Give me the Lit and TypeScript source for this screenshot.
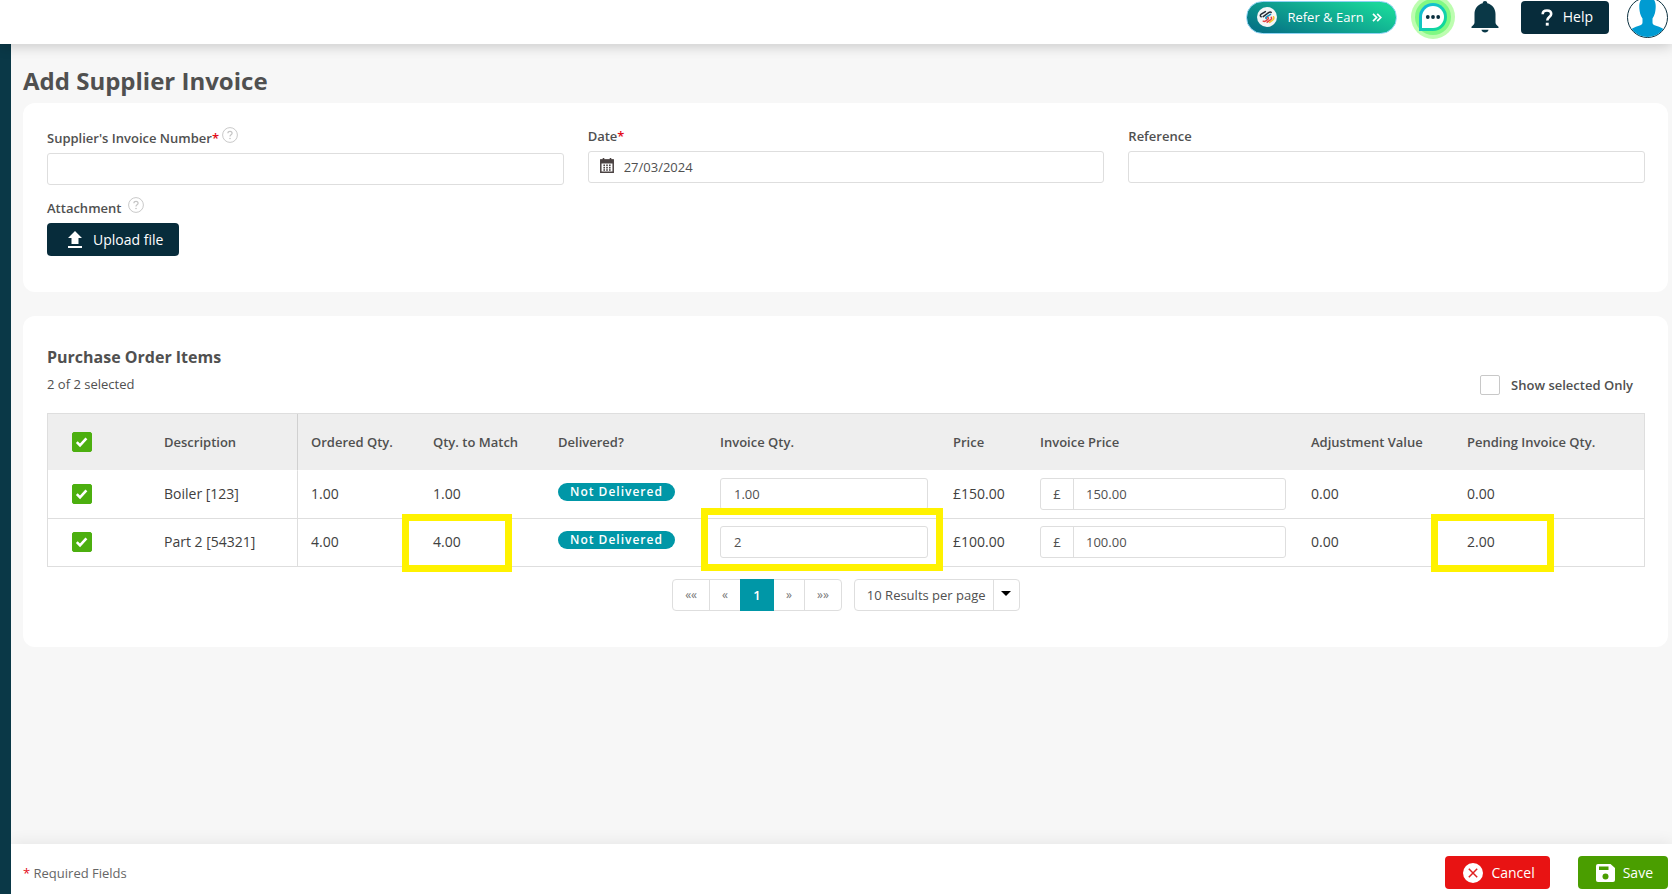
import { LitElement, html, css, svg, nothing } from "lit";
import { customElement, state } from "lit/decorators.js";
import { classMap } from "lit/directives/class-map.js";

interface Item {
  name: string;
  ordered: string;
  toMatch: string;
  invoiceQty: string;
  price: string;
  invoicePrice: string;
  adjustment: string;
  pending: string;
  selected: boolean;
  marked: boolean;
}

const helpIcon = html`<svg class="hint" viewBox="0 0 16 16" role="img" aria-label="More information">
  <circle cx="8" cy="8" r="7.4" fill="none" stroke="#c9c9c9" />
  <path d="M5.9 6.3c0-1.3.9-2 2.1-2s2.1.7 2.1 1.9c0 1.6-2.1 1.5-2.1 3.2" fill="none" stroke="#c4c4c4" stroke-width="1.2" />
  <circle cx="8" cy="11.5" r=".8" fill="#c4c4c4" />
</svg>`;

const dots = [4.2, 7, 9.8].flatMap((x) => [7.3, 9.7, 12].map((y) => [x, y]));

@customElement("app-root")
export class AppRoot extends LitElement {
  @state() private items: Item[] = [
    { name: "Boiler [123]", ordered: "1.00", toMatch: "1.00", invoiceQty: "1.00", price: "£150.00", invoicePrice: "150.00", adjustment: "0.00", pending: "0.00", selected: true, marked: false },
    { name: "Part 2 [54321]", ordered: "4.00", toMatch: "4.00", invoiceQty: "2", price: "£100.00", invoicePrice: "100.00", adjustment: "0.00", pending: "2.00", selected: true, marked: true },
  ];
  @state() private selectedOnly = false;

  static styles = css`
    :host {
      display: flex;
      flex-direction: column;
      min-height: 100vh;
      background: #f7f7f7;
      color: #505050;
      font: 13px/18px "Open Sans", "Noto Sans", sans-serif;
    }
    * { box-sizing: border-box; }
    button, input, select { font: inherit; color: inherit; margin: 0; }
    button { cursor: pointer; }
    svg { display: block; flex: none; }

    .topbar {
      display: flex;
      justify-content: flex-end;
      align-items: center;
      height: 44px;
      padding: 0 4px 10px 0;
      background: #fff;
      box-shadow: 0 2px 14px rgba(0, 0, 0, 0.2);
      z-index: 1;
      clip-path: inset(0 0 -20px 0);
    }
    .refer {
      display: flex;
      align-items: center;
      gap: 10px;
      height: 33px;
      padding: 0 14px 0 10px;
      border: 1px solid #8fd3f4;
      border-radius: 17px;
      background: linear-gradient(20deg, #067586 10%, #19d69a 90%);
      color: #fff;
      text-decoration: none;
      white-space: nowrap;
    }
    .refer-text { display: flex; align-items: center; gap: 8px; }
    .icon-btn { padding: 0; border: 0; background: none; }
    .chat { margin-left: 14px; }
    .bell { margin-left: 16px; }
    .help { margin-left: 22px; }
    .avatar { margin-left: 18px; }

    .btn {
      display: inline-flex;
      align-items: center;
      gap: 10px;
      height: 33px;
      padding: 0 16px 0 20px;
      border: 0;
      border-radius: 4px;
      background: #072c3b;
      color: #fff;
      font-size: 14px;
    }
    .btn.small-gap { gap: 8px; padding: 0 15px 0 18px; }
    .btn.cancel { background: #e81313; }
    .btn.save { background: #4a9e00; }

    .shell { display: flex; flex: 1; }
    .rail { flex: none; width: 11px; background: #0a3847; }
    .page { display: flex; flex-direction: column; flex: 1; min-width: 0; }
    main { flex: 1; padding: 21px 4px 24px 12px; }
    h1 { margin: 0 0 6px; font-size: 24px; line-height: 32px; font-weight: 700; }
    h2 { margin: 0 0 6px; font-size: 16px; line-height: 24px; font-weight: 700; }
    .card { padding: 24px 23px 36px 24px; border-radius: 12px; background: #fff; }
    .card + .card { margin-top: 24px; padding-top: 29px; }

    .fields { display: grid; grid-template-columns: repeat(3, minmax(0, 1fr)); gap: 12px 24px; align-items: start; }
    .label-row { display: flex; align-items: flex-start; gap: 3px; margin-bottom: 6px; }
    .label-row.hinted { height: 20px; }
    .label-row.wide { gap: 7px; }
    .label-row.hinted label, .label-row.hinted .label { padding-top: 2px; }
    .label-row label, .label { font-weight: 600; }
    .req { color: #e30b17; }
    .hint { width: 16px; height: 16px; }
    .box {
      display: flex;
      align-items: center;
      width: 100%;
      height: 32px;
      padding: 0 13px;
      border: 1px solid #dedede;
      border-radius: 3px;
      background: #fff;
    }
    .box .bare { flex: 1; min-width: 0; height: 100%; padding: 0; border: 0; outline: 0; background: none; }
    .date { gap: 10px; padding-left: 11px; }
    .date svg { margin-bottom: 4px; }

    .list-head { display: flex; justify-content: space-between; align-items: flex-start; margin-bottom: 18px; }
    .only { display: flex; align-items: center; gap: 11px; height: 20px; padding-right: 12px; font-weight: 600; }

    .tick {
      display: block;
      appearance: none;
      width: 20px;
      height: 20px;
      border: 1px solid #c8c8c8;
      border-radius: 2px;
      background: #fff;
    }
    .tick:checked {
      border-color: #4caf0f;
      background: #4caf0f url("data:image/svg+xml,%3Csvg xmlns='http://www.w3.org/2000/svg' viewBox='0 0 18 18'%3E%3Cpath d='M3.8 9.2l3.2 3.2 6.4-7' fill='none' stroke='white' stroke-width='2.6'/%3E%3C/svg%3E") center / 18px 18px no-repeat;
    }

    table { width: 100%; table-layout: fixed; border-collapse: separate; border-spacing: 0; border: solid #dedede; border-width: 1px 1px 0; }
    .c-check { width: 103px; }
    .c-desc { width: 147px; }
    .c-ordered { width: 122px; }
    .c-match { width: 125px; }
    .c-delivered { width: 162px; }
    .c-qty { width: 233px; }
    .c-price { width: 87px; }
    .c-inv { width: 271px; }
    .c-adj { width: 156px; }
    .c-pending { width: 190px; }
    th, td { padding: 0 12px 0 13px; text-align: left; white-space: nowrap; }
    th { height: 57px; background: #eee; border-bottom: 1px solid #fff; font-weight: 600; }
    td { position: relative; height: 48px; padding-bottom: 1px; border-bottom: 1px solid #dedede; font-size: 14px; color: #404040; }
    .check { padding-left: 24px; }
    .desc { border-right: 1px solid #dedede; }
    th.desc { border-right-color: #d0d0d0; }
    td .box { font-size: 13px; color: #505050; }
    .money { padding: 0 12px 0 0; }
    .money .sign { display: flex; align-items: center; justify-content: center; width: 33px; height: 100%; margin-right: 12px; border-right: 1px solid #dedede; }
    .badge {
      display: block;
      width: max-content;
      margin-bottom: 4px;
      padding: 0 12px;
      border-radius: 9px;
      background: #0097a7;
      color: #fff;
      font-size: 12px;
      font-weight: 600;
      letter-spacing: 1px;
    }
    .mark { position: absolute; z-index: 1; inset: -5px 33px -6px -18px; border: 7px solid #fff200; pointer-events: none; }
    .mark.input-mark { inset: -11px -3px -5px -6px; }
    .mark.last-mark { inset: -5px 90px -6px -23px; }

    .pager { display: flex; justify-content: center; gap: 12px; margin-top: 12px; }
    .pages { display: flex; height: 32px; border: 1px solid #dedede; border-radius: 4px; }
    .pages button { padding: 0 12px; border: 0; border-right: 1px solid #dedede; background: none; font-size: 12px; color: #777; }
    .pages button:last-child { border-right: 0; }
    .pages .no-line { border-right: 0; }
    .pages .current { width: 34px; margin: -1px 0; border: 0; background: #0097a7; color: #fff; font-size: 13px; font-weight: 600; }
    .per-page { position: relative; height: 32px; border: 1px solid #dedede; border-radius: 4px; }
    .per-page select { height: 30px; padding: 0 33px 0 12px; border: 0; background: none; appearance: none; outline: 0; }
    .per-page .arrow { position: absolute; inset: 0 0 0 auto; display: flex; align-items: center; justify-content: center; width: 26px; border-left: 1px solid #dedede; pointer-events: none; }
    .arrow svg { margin-bottom: 3px; }

    footer {
      display: flex;
      align-items: center;
      justify-content: space-between;
      padding: 12px 4px 5px 12px;
      background: #fff;
      box-shadow: 0 -2px 14px rgba(0, 0, 0, 0.07);
      color: #666;
      clip-path: inset(-20px 0 0 0);
    }
    .actions { display: flex; gap: 28px; }
  `;

  private toggle(index: number, value: boolean) {
    this.items = this.items.map((it, i) => (i === index ? { ...it, selected: value } : it));
  }

  private toggleAll(e: Event) {
    const value = (e.target as HTMLInputElement).checked;
    this.items = this.items.map((it) => ({ ...it, selected: value }));
  }

  private renderTopbar() {
    return html`<header class="topbar">
      <a class="refer" href="#refer">
        <svg width="20" height="20" viewBox="0 0 20 20" aria-hidden="true">
          <circle cx="10" cy="10" r="10" fill="#f4f6f6" />
          <g fill="none" stroke-width="1.5" stroke-linecap="round" stroke-linejoin="round">
            <path d="M4.200 9.800C3 9 3 8 4.200 7.200l4.200-2.600" stroke="#222b35" />
            <path d="M6.200 9.600l5.400-3.900c1-.7 1.900-.8 2.600-.3" stroke="#222b35" />
            <path d="M13.600 7.300L9.400 10c-.9.600-.8 1.300 0 1.700" stroke="#1b93c0" />
            <path d="M6.200 14.200c1 .5 1.700.3 2.600-.3l2-1.500c.9-.7.800-1.400 0-1.900" stroke="#e4403e" />
            <path d="M10.200 15.200l3.600-2.600c1-.8 1.200-1.500.4-2.300" stroke="#e4403e" />
            <path d="M12.600 15.400l3-2.200c1.300-1 1.600-2.300.9-3.500" stroke="#f3c52e" />
          </g>
        </svg>
        <span class="refer-text">Refer &amp; Earn
          <svg width="10" height="9" viewBox="0 0 10 9" fill="none" stroke="#fff" stroke-width="1.7" aria-hidden="true"><path d="M1 .8l3.6 3.7L1 8.200M5.200.8l3.600 3.700-3.600 3.700" /></svg>
        </span>
      </a>
      <button class="icon-btn chat" aria-label="Chat">
        <svg width="44" height="44" viewBox="0 0 44 44">
          <defs><linearGradient id="chat" x1="0" y1="0" x2="1" y2="1"><stop offset="0" stop-color="#12b5e6" /><stop offset="1" stop-color="#10e08a" /></linearGradient></defs>
          <circle cx="22" cy="22" r="22" fill="#bdfdb0" />
          <circle cx="22" cy="22" r="18" fill="#80f983" />
          <path d="M22 8a14 14 0 1 1 0 28H8V22A14 14 0 0 1 22 8z" fill="url(#chat)" />
          <path d="M22 11a11 11 0 1 1 0 22h-11V22A11 11 0 0 1 22 11z" fill="#fff" />
          <g fill="#0a2f3e"><circle cx="16.800" cy="22" r="1.900" /><circle cx="22" cy="22" r="1.900" /><circle cx="27.200" cy="22" r="1.900" /></g>
        </svg>
      </button>
      <button class="icon-btn bell" aria-label="Notifications">
        <svg width="28" height="32" viewBox="0 0 28 32" fill="#0a3847">
          <path d="M14 0c1.400 0 2.200.9 2.300 2.300 4.900 1.200 8.200 5.300 8.200 10.700v8.500c0 1.600.9 2.600 3 4.200v1.300H.5v-1.300c2.100-1.600 3-2.600 3-4.200V13c0-5.400 3.300-9.500 8.200-10.700C11.800.9 12.600 0 14 0z" />
          <path d="M10.500 28.800h7c-.3 1.700-1.700 2.700-3.500 2.700s-3.200-1-3.500-2.700z" />
        </svg>
      </button>
      <button class="btn help">
        <svg width="12" height="17" viewBox="0 0 12 17" fill="none" stroke="#fff" aria-hidden="true">
          <path d="M1.700 5.200C1.700 2.800 3.400 1.500 6 1.500s4.200 1.400 4.200 3.500c0 3-3.900 3.200-3.900 6.400" stroke-width="2.600" />
          <path d="M4.800 15.200h2.900" stroke-width="2.900" />
        </svg>
        Help
      </button>
      <button class="icon-btn avatar" aria-label="Account">
        <svg width="41" height="41" viewBox="0 0 41 41">
          <defs><clipPath id="round"><circle cx="20.500" cy="20.500" r="19.600" /></clipPath></defs>
          <circle cx="20.500" cy="20.500" r="20" fill="#fff" stroke="#0a2f3e" />
          <path clip-path="url(#round)" fill="#009bd2" d="M20.500 0c5.500 0 8.200 3.500 8.200 9 0 6-1.200 9.500-3.200 12.500v4c0 1.500.8 2.300 2.800 3 5.500 1.900 9 3.200 11.700 6.500V41H1v-6c2.700-3.300 6.200-4.600 11.700-6.500 2-.7 2.800-1.500 2.800-3v-4c-2-3-3.200-6.500-3.200-12.500 0-5.500 2.700-9 8.200-9z" />
        </svg>
      </button>
    </header>`;
  }

  private renderRow(item: Item, i: number) {
    return html`<tr>
      <td class="check"><input class="tick" type="checkbox" aria-label="Select ${item.name}" .checked=${item.selected}
        @change=${(e: Event) => this.toggle(i, (e.target as HTMLInputElement).checked)} /></td>
      <td class="desc">${item.name}</td>
      <td>${item.ordered}</td>
      <td>${item.toMatch}${item.marked ? html`<span class="mark"></span>` : nothing}</td>
      <td><span class="badge">Not Delivered</span></td>
      <td><input class="box" type="text" aria-label="Invoice quantity of ${item.name}" .value=${item.invoiceQty} />${item.marked ? html`<span class="mark input-mark"></span>` : nothing}</td>
      <td>${item.price}</td>
      <td><label class="box money"><span class="sign">£</span><input class="bare" type="text" aria-label="Invoice price of ${item.name}" .value=${item.invoicePrice} /></label></td>
      <td>${item.adjustment}</td>
      <td>${item.pending}${item.marked ? html`<span class="mark last-mark"></span>` : nothing}</td>
    </tr>`;
  }

  render() {
    const chosen = this.items.filter((it) => it.selected).length;
    const cols = ["check", "desc", "ordered", "match", "delivered", "qty", "price", "inv", "adj", "pending"];
    const heads = ["Ordered Qty.", "Qty. to Match", "Delivered?", "Invoice Qty.", "Price", "Invoice Price", "Adjustment Value", "Pending Invoice Qty."];
    const pages = [
      { text: "««", label: "First page" },
      { text: "«", label: "Previous page", noLine: true },
      { text: "1", label: "Page 1", current: true },
      { text: "»", label: "Next page" },
      { text: "»»", label: "Last page" },
    ];
    return html`
      ${this.renderTopbar()}
      <div class="shell">
        <nav class="rail" aria-label="Main menu"></nav>
        <div class="page">
          <main>
            <h1>Add Supplier Invoice</h1>
            <section class="card">
              <div class="fields">
                <div>
                  <div class="label-row hinted"><label for="number">Supplier's Invoice Number<span class="req">*</span></label>${helpIcon}</div>
                  <input class="box" id="number" type="text" />
                </div>
                <div>
                  <div class="label-row"><label for="date">Date<span class="req">*</span></label></div>
                  <div class="box date">
                    <svg width="14" height="15" viewBox="0 0 14 15" aria-hidden="true">
                      <path d="M3.500 0v3M10.500 0v3" stroke="#4a4242" stroke-width="1.600" />
                      <path d="M.8 2h12.400v12.200H.8z" fill="#fff" stroke="#4a4242" stroke-width="1.500" />
                      <path d="M.5 1.500h13v4H.5z" fill="#4a4242" />
                      ${dots.map(([x, y]) => svg`<rect x=${x - 0.8} y=${y - 0.8} width="1.600" height="1.600" fill="#4a4242" />`)}
                    </svg>
                    <input class="bare" id="date" type="text" .value=${"27/03/2024"} />
                  </div>
                </div>
                <div>
                  <div class="label-row"><label for="reference">Reference</label></div>
                  <input class="box" id="reference" type="text" />
                </div>
                <div>
                  <div class="label-row hinted wide"><span class="label">Attachment</span>${helpIcon}</div>
                  <button class="btn">
                    <svg width="16" height="17" viewBox="0 0 16 17" fill="#fff" aria-hidden="true"><path d="M8 0l7 7h-3.500v6h-7V7H1zM1 15h14v2H1z" /></svg>
                    Upload file
                  </button>
                </div>
              </div>
            </section>
            <section class="card">
              <h2>Purchase Order Items</h2>
              <div class="list-head">
                <span>${chosen} of ${this.items.length} selected</span>
                <label class="only"><input class="tick" type="checkbox" .checked=${this.selectedOnly}
                  @change=${(e: Event) => (this.selectedOnly = (e.target as HTMLInputElement).checked)} />Show selected Only</label>
              </div>
              <table>
                <colgroup>${cols.map((c) => html`<col class="c-${c}" />`)}</colgroup>
                <thead><tr>
                  <th class="check"><input class="tick" type="checkbox" aria-label="Select all" .checked=${chosen === this.items.length} @change=${this.toggleAll} /></th>
                  <th class="desc">Description</th>
                  ${heads.map((h) => html`<th>${h}</th>`)}
                </tr></thead>
                <tbody>${this.items.map((it, i) => (this.selectedOnly && !it.selected ? nothing : this.renderRow(it, i)))}</tbody>
              </table>
              <div class="pager">
                <div class="pages">
                  ${pages.map((p) => html`<button aria-label=${p.label} class=${classMap({ current: !!p.current, "no-line": !!p.noLine })}>${p.text}</button>`)}
                </div>
                <div class="per-page">
                  <select aria-label="Results per page"><option>10 Results per page</option></select>
                  <span class="arrow"><svg width="10" height="5" viewBox="0 0 10 5" aria-hidden="true"><path d="M0 0h10L5 5z" /></svg></span>
                </div>
              </div>
            </section>
          </main>
          <footer>
            <span><span class="req">*</span> Required Fields</span>
            <div class="actions">
              <button class="btn cancel small-gap">
                <svg width="20" height="20" viewBox="0 0 20 20" aria-hidden="true"><circle cx="10" cy="10" r="10" fill="#fff" /><path d="M5.800 5.800l8.400 8.400M14.200 5.800l-8.400 8.400" stroke="#e02020" stroke-width="1.500" /></svg>
                Cancel
              </button>
              <button class="btn save small-gap">
                <svg width="19" height="18" viewBox="0 0 19 18" aria-hidden="true"><path d="M2 0h12.500L19 4v12a2 2 0 0 1-2 2H2a2 2 0 0 1-2-2V2a2 2 0 0 1 2-2z" fill="#fff" /><path d="M3 2.500h9.500V6H3z" fill="#4a9e00" /><circle cx="9.500" cy="12.500" r="3" fill="#4a9e00" /></svg>
                Save
              </button>
            </div>
          </footer>
        </div>
      </div>
    `;
  }
}
